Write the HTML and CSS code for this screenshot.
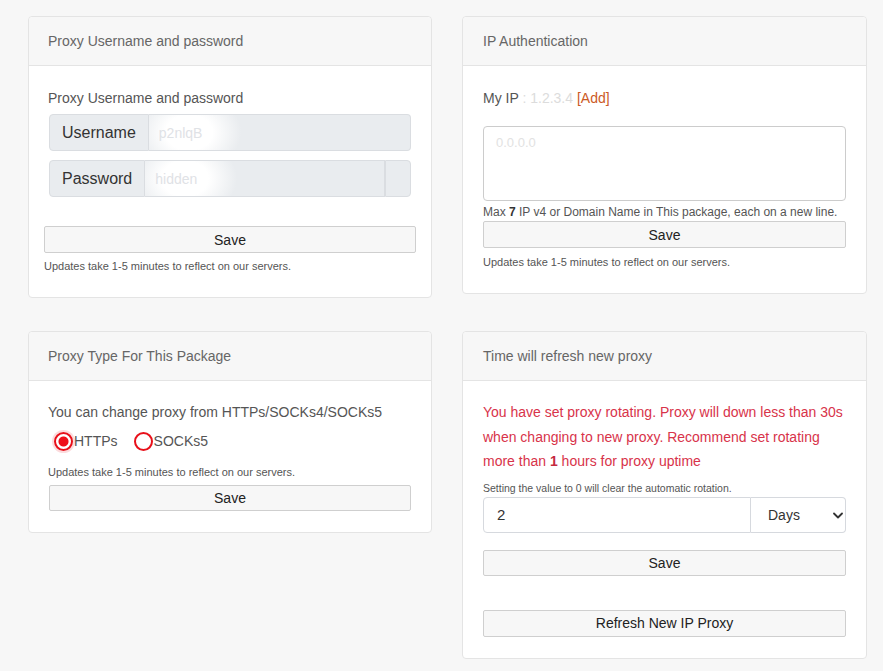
FILE: index.html
```html
<!DOCTYPE html>
<html lang="en">
<head>
  <meta charset="UTF-8">
  <meta name="viewport" content="width=device-width, initial-scale=1.0">
  <title>Proxy settings</title>
  <link rel="stylesheet" href="styles.css">
</head>
<body>
  <div class="grid">

    <div class="card">
      <div class="card-header">Proxy Username and password</div>
      <div class="card-body auth-body">
        <p class="label">Proxy Username and password</p>
        <div class="input-group">
          <span class="addon">Username</span>
          <input type="text" class="field blurred" value="p2nlqB" readonly>
        </div>
        <div class="input-group second">
          <span class="addon">Password</span>
          <input type="text" class="field blurred" value="hidden" readonly>
          <span class="addon toggle"></span>
        </div>
        <button class="btn save-wide">Save</button>
        <p class="help">Updates take 1-5 minutes to reflect on our servers.</p>
      </div>
    </div>

    <div class="card">
      <div class="card-header ip-header">IP Authentication</div>
      <div class="card-body ip-body">
        <p class="label">My IP <span class="myip">: 1.2.3.4</span> <a href="#" class="add">[Add]</a></p>
        <textarea class="ip-list" placeholder="0.0.0.0"></textarea>
        <p class="note">Max <b>7</b> IP v4 or Domain Name in This package, each on a new line.</p>
        <button class="btn ip-save">Save</button>
        <p class="help ip-help">Updates take 1-5 minutes to reflect on our servers.</p>
      </div>
    </div>

    <div class="card">
      <div class="card-header">Proxy Type For This Package</div>
      <div class="card-body type-body">
        <p class="lead">You can change proxy from HTTPs/SOCKs4/SOCKs5</p>
        <div class="radios">
          <label><input type="radio" name="ptype" checked>HTTPs</label>
          <label><input type="radio" name="ptype">SOCKs5</label>
        </div>
        <p class="help type-help">Updates take 1-5 minutes to reflect on our servers.</p>
        <button class="btn type-save">Save</button>
      </div>
    </div>

    <div class="card">
      <div class="card-header ip-header">Time will refresh new proxy</div>
      <div class="card-body rotate-body">
        <p class="warning">You have set proxy rotating. Proxy will down less than 30s when changing to new proxy. Recommend set rotating more than <strong>1</strong> hours for proxy uptime</p>
        <p class="help rotate-help">Setting the value to 0 will clear the automatic rotation.</p>
        <div class="input-group rotate-group">
          <input type="text" class="field plain" value="2">
          <div class="select-wrap">
            <select class="unit">
              <option>Days</option>
              <option>Hours</option>
              <option>Minutes</option>
            </select>
            <svg class="chevron" width="10" height="7" viewBox="0 0 10 7"><path d="M1 1.5l4 4 4-4" fill="none" stroke="#333" stroke-width="1.8" stroke-linecap="round" stroke-linejoin="round"/></svg>
          </div>
        </div>
        <button class="btn rotate-save">Save</button>
        <button class="btn refresh">Refresh New IP Proxy</button>
      </div>
    </div>

  </div>
</body>
</html>
```

FILE: styles.css
```css
* {
  box-sizing: border-box;
  margin: 0;
  padding: 0;
}
body {
  font-family: "Liberation Sans", Arial, Helvetica, sans-serif;
  background-color: #f7f7f7;
  color: #555;
}
.grid {
  display: grid;
  grid-template-columns: 404px 405px;
  column-gap: 30px;
  row-gap: 33px;
  align-items: start;
  padding: 16px 0 0 28px;
}
.card {
  background-color: #fff;
  border: 1px solid #e4e4e4;
  border-radius: 4px;
}
.card-header {
  background-color: #f7f7f7;
  border-bottom: 1px solid #e4e4e4;
  border-radius: 4px 4px 0 0;
  height: 49px;
  line-height: 48px;
  padding: 0 19px;
  font-size: 14px;
  color: #666;
}
.ip-header {
  padding: 0 20px;
}
.label {
  font-size: 14px;
  line-height: 20px;
  color: #555;
}
.help {
  font-size: 11px;
  line-height: 14px;
  color: #555;
}
.btn {
  display: block;
  width: 100%;
  height: 26px;
  background-color: #f7f7f7;
  border: 1px solid #cfcfcf;
  border-radius: 2px;
  font-family: inherit;
  font-size: 14px;
  color: #222;
  cursor: pointer;
}
.btn:hover {
  background-color: #eee;
}

/* username / password */
.auth-body {
  padding: 22px 15px 24px;
}
.auth-body .label {
  margin-left: 4px;
  margin-bottom: 6px;
}
.input-group {
  display: flex;
  height: 37px;
  margin: 0 5px;
}
.input-group.second {
  margin-top: 9px;
}
.addon {
  display: flex;
  align-items: center;
  padding: 0 12px;
  background-color: #e9ecef;
  border: 1px solid #dadde1;
  border-radius: 4px 0 0 4px;
  font-size: 16px;
  color: #333;
}
.addon.toggle {
  width: 26px;
  padding: 0;
  border-radius: 0 4px 4px 0;
}
.field {
  flex: 1;
  min-width: 0;
  border: 1px solid #dadde1;
  border-left: none;
  border-radius: 0 4px 4px 0;
  padding: 0 10px;
  font-family: inherit;
  font-size: 14px;
  outline: none;
}
.second .field {
  border-radius: 0;
}
.blurred {
  color: #dfe2e6;
  background: radial-gradient(ellipse 52px 40px at 40px 50%, #fff 45%, #e9ecef 100%);
}
.save-wide {
  margin-top: 29px;
  height: 27px;
}
.auth-body .help {
  margin-top: 6px;
}

/* ip auth */
.ip-body {
  padding: 22px 20px 24px;
}
.myip {
  color: #dcdcdc;
}
.add {
  color: #cc5a26;
  text-decoration: none;
}
.ip-list {
  display: block;
  width: 100%;
  height: 75px;
  margin-top: 18px;
  border: 1px solid #ccc;
  border-radius: 4px;
  padding: 8px 12px;
  font-family: inherit;
  font-size: 13px;
  resize: none;
  outline: none;
}
.ip-list::placeholder {
  color: #e2e2e2;
}
.note {
  margin-top: 4px;
  margin-bottom: 2px;
  font-size: 12px;
  line-height: 14px;
  color: #555;
}
.note b {
  color: #333;
}
.ip-save {
  height: 27px;
}
.ip-help {
  margin-top: 7px;
}

/* proxy type */
.type-body {
  padding: 21px 19px 21px;
}
.lead {
  font-size: 14px;
  line-height: 20px;
  color: #555;
}
.radios {
  display: flex;
  gap: 16px;
  margin-top: 8px;
  margin-left: 6px;
  height: 22px;
  align-items: center;
}
.radios label {
  display: flex;
  align-items: center;
  font-size: 14px;
  color: #555;
  cursor: pointer;
}
.radios input {
  appearance: none;
  -webkit-appearance: none;
  width: 19px;
  height: 19px;
  margin-right: 1px;
  border: 2px solid #e8101a;
  border-radius: 50%;
  background-color: #fff;
}
.radios input:checked {
  background: radial-gradient(circle, #ee0f19 0 4.5px, #fff 5.5px);
  box-shadow: 0 0 0 2px rgba(232, 16, 26, 0.15);
}
.type-help {
  margin-top: 13px;
}
.type-save {
  margin: 6px 1px 0;
  width: calc(100% - 2px);
}

/* rotation */
.rotate-body {
  padding: 19px 20px 21px;
}
.warning {
  font-size: 14px;
  line-height: 24.5px;
  color: #d8334a;
}
.warning strong {
  color: #c52a3f;
}
.rotate-help {
  margin-top: 7px;
  font-size: 10.5px;
}
.rotate-group {
  margin: 2px 0 0;
  height: 36px;
}
.field.plain {
  background-color: #fff;
  color: #333;
  border: 1px solid #d6d9de;
  border-radius: 4px 0 0 4px;
  padding: 0 13px;
  font-size: 15px;
}
.select-wrap {
  position: relative;
  width: 95px;
}
.unit {
  appearance: none;
  -webkit-appearance: none;
  width: 100%;
  height: 100%;
  border: 1px solid #d6d9de;
  border-left: none;
  border-radius: 0 4px 4px 0;
  background-color: #fff;
  padding: 0 17px;
  font-family: inherit;
  font-size: 14px;
  color: #333;
  outline: none;
}
.chevron {
  position: absolute;
  right: 3px;
  top: 15px;
  pointer-events: none;
}
.rotate-save {
  margin-top: 17px;
}
.refresh {
  margin-top: 34px;
  height: 27px;
}
```
